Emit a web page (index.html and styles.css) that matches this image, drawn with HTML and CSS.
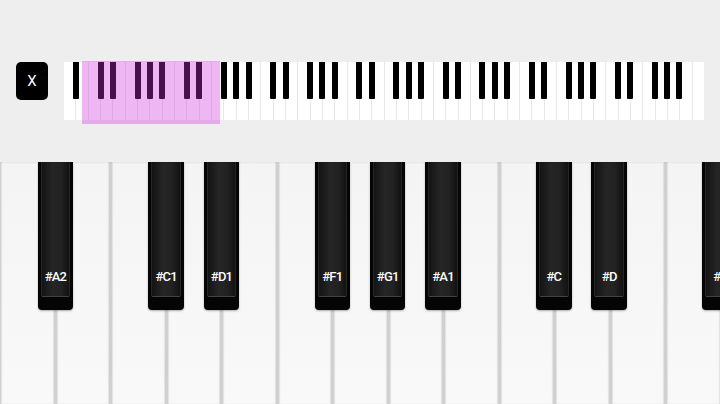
FILE: index.html
```html
<!DOCTYPE html>
<html lang="en">
<head>
    <meta charset="UTF-8">
    <meta name="viewport" content="width=device-width, initial-scale=1.0">
    <title>Piano</title>
    <link rel="stylesheet" href="styles.css">
</head>
<body>
    <div class="top-bar">
        <button class="close-btn" type="button">X</button>
        <div class="mini-keyboard" id="miniKeyboard">
            <div class="mini-whites" id="miniWhites"></div>
            <div class="mini-window"></div>
        </div>
    </div>
    <div class="keyboard" id="keyboard">
        <div class="whites" id="whites"></div>
    </div>
    <script>
        // note names of the white keys, starting at A
        const NOTES = ['A', 'B', 'C', 'D', 'E', 'F', 'G'];
        const HAS_SHARP = ['A', 'C', 'D', 'F', 'G'];

        // Overview strip: 88 key piano, 52 white keys
        function buildMini() {
            const board = document.getElementById('miniKeyboard');
            const whites = document.getElementById('miniWhites');
            const count = 52;
            const step = 640 / count;
            for (let i = 0; i < count; i++) {
                const w = document.createElement('div');
                w.className = 'mini-white';
                whites.appendChild(w);
                const note = NOTES[i % 7];
                if (i < count - 1 && HAS_SHARP.includes(note)) {
                    const b = document.createElement('div');
                    b.className = 'mini-black';
                    b.style.left = ((i + 1) * step - 3) + 'px';
                    board.appendChild(b);
                }
            }
        }

        // Main keys
        function buildMain() {
            const board = document.getElementById('keyboard');
            const whites = document.getElementById('whites');
            const labels = {1: '#A2', 3: '#C1', 4: '#D1', 6: '#F1', 7: '#G1', 8: '#A1', 10: '#C', 11: '#D', 13: '#F'};
            const count = 13;
            const step = 720 / count;
            for (let i = 0; i < count; i++) {
                const w = document.createElement('div');
                w.className = 'white-key';
                whites.appendChild(w);
            }
            Object.keys(labels).forEach(i => {
                const b = document.createElement('div');
                b.className = 'black-key';
                b.style.left = (i * step - 17.75) + 'px';
                b.innerHTML = `<div class="black-face"><span>${labels[i]}</span></div>`;
                board.appendChild(b);
            });
        }

        buildMini();
        buildMain();
    </script>
</body>
</html>
```

FILE: styles.css
```css
body {
    margin: 0;
    padding: 0;
    width: 720px;
    height: 404px;
    overflow: hidden;
    font-family: Roboto, "Noto Sans", sans-serif;
    background: #f5f5f5;
}
.top-bar {
    height: 162px;
    box-sizing: border-box;
    padding: 62px 0 0 16px;
    background: #eeeeee;
    display: flex;
    align-items: flex-start;
    gap: 16px;
    box-shadow: 0 1px 2px rgba(0, 0, 0, 0.05);
    position: relative;
    z-index: 2;
}
.close-btn {
    width: 32px;
    height: 38px;
    border: none;
    border-radius: 5px;
    background: #000;
    color: #fff;
    font-family: Roboto, sans-serif;
    font-size: 15px;
    padding: 0;
}
.mini-keyboard {
    position: relative;
    width: 640px;
    height: 58px;
}
.mini-whites {
    display: flex;
    height: 100%;
}
.mini-white {
    flex: 1;
    background: #fff;
    border-right: 1px solid #e8e8e8;
}
.mini-white:last-child {
    border-right: none;
}
.mini-black {
    position: absolute;
    top: 0;
    width: 6px;
    height: 37px;
    background: #000;
    border-radius: 0 0 1px 1px;
}
.mini-window {
    position: absolute;
    left: 18px;
    top: -1px;
    width: 138px;
    height: 63px;
    background: rgba(205, 50, 220, 0.35);
    z-index: 1;
}
.keyboard {
    position: relative;
    height: 242px;
}
.whites {
    display: flex;
    gap: 3px;
    height: 100%;
    padding-left: 1px;
    background: #d0d0d0;
}
.white-key {
    flex: 1;
    background: linear-gradient(to bottom, #f4f4f4, #f9f9f9);
    box-shadow: inset 1px 0 1px #e2e2e2, inset -1px 0 1px #e2e2e2;
}
.black-key {
    position: absolute;
    top: 0;
    width: 35.5px;
    height: 148px;
    box-sizing: border-box;
    padding: 0 3px 13px 3px;
    background: #050505;
    border-radius: 0 0 4px 4px;
    box-shadow: 0 1px 2px rgba(0, 0, 0, 0.3);
}
.black-face {
    height: 100%;
    box-sizing: border-box;
    display: flex;
    align-items: flex-end;
    justify-content: center;
    padding-bottom: 12px;
    background: linear-gradient(to right, #141414, #252525 40%, #222222 70%, #121212);
    border: 1px solid #262626;
    border-top: none;
    border-bottom-color: #444;
    border-radius: 0 0 2px 2px;
}
.black-face span {
    color: #fff;
    font-size: 13px;
    font-weight: 500;
    letter-spacing: -0.8px;
    line-height: 14px;
}
```
